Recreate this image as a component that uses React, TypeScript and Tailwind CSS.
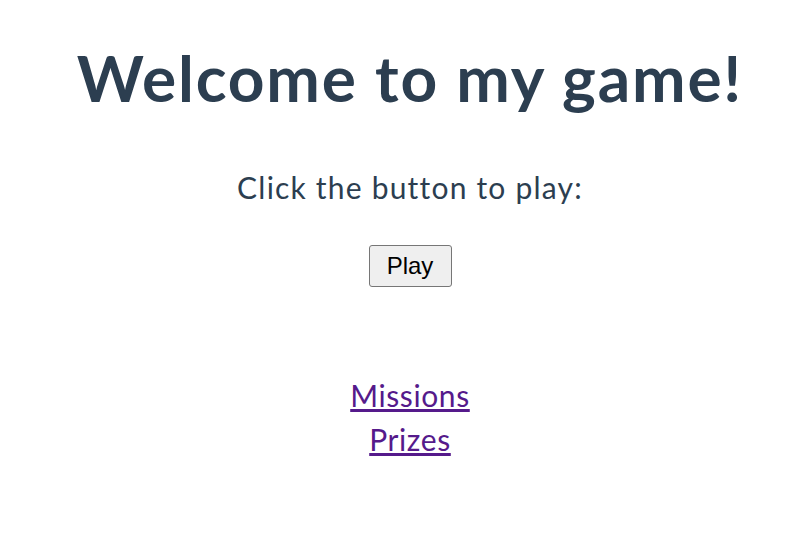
export default function App() {
  return (
    <div className="min-h-screen bg-white pl-[22px] flex flex-col items-center text-[#2c3e50] font-['Lato','Noto_Sans',sans-serif]">
      <h1 className="mt-[38px] text-[64px] leading-[80px] font-bold tracking-[1.8px]">Welcome to my game!</h1>
      <p className="mt-[49px] text-[30px] leading-[40px] tracking-[1.2px]">Click the button to play:</p>
      <button className="mt-[38px] h-[42px] w-[83px] rounded-[3px] border border-[#767676] bg-[#efefef] text-[24px] text-black font-['Liberation_Sans',Arial,sans-serif]">
        Play
      </button>
      <div className="mt-[86px] flex flex-col items-center text-[30px] leading-[44px] tracking-[0.6px]">
        <a href="#" className="text-[#551a8b] underline">Missions</a>
        <a href="#" className="text-[#551a8b] underline">Prizes</a>
      </div>
    </div>
  )
}
